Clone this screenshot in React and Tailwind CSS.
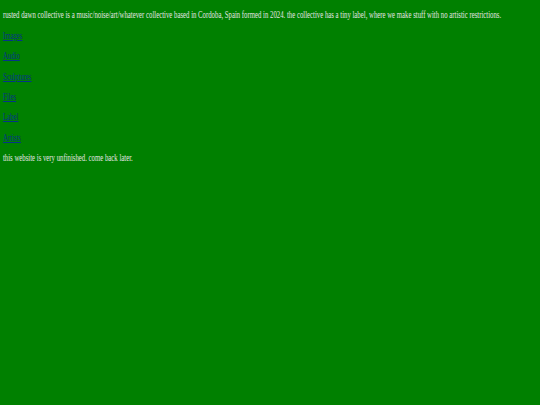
export default function App() {
  const links = ["Images", "Audio", "Sculptures", "Files", "Label", "Artists"];

  return (
    <div className="h-[405px] overflow-hidden bg-[#008000]">
      {/* the page text is squeezed sideways, like a stretched-down capture */}
      <div className="flex w-[766px] origin-top-left scale-x-[0.705] flex-col gap-[9.6px] px-[4.2px] pt-[10.4px] font-['Liberation_Serif',serif] text-[9.6px] leading-[1.125] text-[#e4e4e4]">
        <p>
          rusted dawn collective is a music/noise/art/whatever collective based in Cordoba, Spain formed in 2024. the
          collective has a tiny label, where we make stuff with no artistic restrictions.
        </p>
        {links.map((l) => (
          <p key={l}>
            <a href="#" className="text-[#06338a] underline">
              {l}
            </a>
          </p>
        ))}
        <p>this website is very unfinished. come back later.</p>
      </div>
    </div>
  );
}
